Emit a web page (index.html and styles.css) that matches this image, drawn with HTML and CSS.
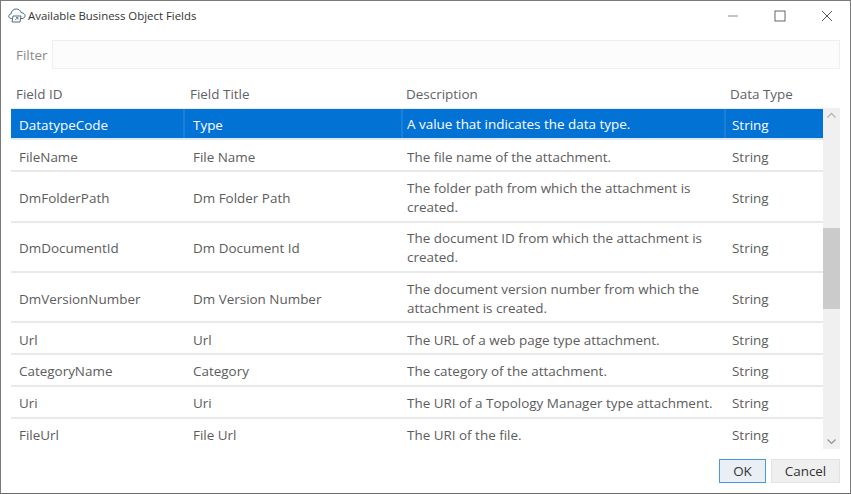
FILE: index.html
```html
<!DOCTYPE html>
<html lang="en">
<head>
<meta charset="utf-8">
<title>Available Business Object Fields</title>
<link rel="stylesheet" href="styles.css">
</head>
<body>
<div class="dialog">
  <header class="titlebar">
    <svg class="app-icon" width="18" height="15" viewBox="0 0 18 15" fill="none" stroke="#2f6f9f" stroke-width="1">
      <path d="M4 10.5H3.2C1.8 10.5 .8 9.5 .8 8.2 .8 7 1.7 6 3 5.9 3.3 3 5.5 1 8.2 1c2.4 0 4.4 1.5 5 3.7 2.2 0 3.9 1.4 3.9 3.1 0 1.5-1.2 2.7-3 2.7H13"/>
      <path d="M5 8h8l-1 6H4z" stroke="#5a6b78"/>
      <path d="M7 12l3-2.5M8 9.5h2v2" stroke="#5a6b78" stroke-width=".8"/>
    </svg>
    <span class="title">Available Business Object Fields</span>
    <div class="win-controls">
      <svg width="12" height="12" viewBox="0 0 12 12"><path d="M1 6h10" stroke="#8a8a8a" stroke-width="1"/></svg>
      <svg width="12" height="12" viewBox="0 0 12 12" fill="none"><rect x="1" y="1" width="10" height="10" stroke="#666"/></svg>
      <svg width="12" height="12" viewBox="0 0 12 12" fill="none"><path d="M1 1l10 10M11 1L1 11" stroke="#555"/></svg>
    </div>
  </header>
  <div class="filter">
    <label class="filter-label" for="filter">Filter</label>
    <input id="filter" class="filter-input" type="text">
  </div>
  <div class="heads">
    <span class="c1">Field ID</span>
    <span class="c2">Field Title</span>
    <span class="c3">Description</span>
    <span class="c4">Data Type</span>
  </div>
  <div class="grid-wrap">
    <div class="rows">
      <div class="row selected h31"><span class="c1">DatatypeCode</span><span class="c2">Type</span><span class="c3">A value that indicates the data type.</span><span class="c4">String</span></div>
      <div class="row h32 low"><span class="c1">FileName</span><span class="c2">File Name</span><span class="c3">The file name of the attachment.</span><span class="c4">String</span></div>
      <div class="row h51"><span class="c1">DmFolderPath</span><span class="c2">Dm Folder Path</span><span class="c3">The folder path from which the attachment is created.</span><span class="c4">String</span></div>
      <div class="row h50"><span class="c1">DmDocumentId</span><span class="c2">Dm Document Id</span><span class="c3">The document ID from which the attachment is created.</span><span class="c4">String</span></div>
      <div class="row h50 low"><span class="c1">DmVersionNumber</span><span class="c2">Dm Version Number</span><span class="c3">The document version number from which the attachment is created.</span><span class="c4">String</span></div>
      <div class="row h32 low"><span class="c1">Url</span><span class="c2">Url</span><span class="c3">The URL of a web page type attachment.</span><span class="c4">String</span></div>
      <div class="row h32"><span class="c1">CategoryName</span><span class="c2">Category</span><span class="c3">The category of the attachment.</span><span class="c4">String</span></div>
      <div class="row h32"><span class="c1">Uri</span><span class="c2">Uri</span><span class="c3">The URI of a Topology Manager type attachment.</span><span class="c4">String</span></div>
      <div class="row last"><span class="c1">FileUrl</span><span class="c2">File Url</span><span class="c3">The URI of the file.</span><span class="c4">String</span></div>
    </div>
    <div class="scrollbar">
      <svg class="arrow" width="17" height="16" viewBox="0 0 17 16" fill="none"><path d="M4.5 9.5l4-4 4 4" stroke="#b5b5b5" stroke-width="1.3"/></svg>
      <div class="track"><div class="thumb"></div></div>
      <svg class="arrow" width="17" height="16" viewBox="0 0 17 16" fill="none"><path d="M4.5 6.5l4 4 4-4" stroke="#8f8f8f" stroke-width="1.1"/></svg>
    </div>
  </div>
  <footer class="actions">
    <button class="btn primary" type="button">OK</button>
    <button class="btn" type="button">Cancel</button>
  </footer>
</div>
</body>
</html>
```
FILE: styles.css
```css
* { box-sizing: border-box; }
html, body { margin: 0; height: 100%; background: #fff; }
body { font-family: "Open Sans", "Noto Sans", sans-serif; font-size: 13.45px; color: #5c5c5c; }
.dialog { width: 851px; height: 494px; border: 1px solid #7a7a7a; border-bottom-color: #6a6a6a; display: flex; flex-direction: column; background: #fff; }
.titlebar { height: 29px; flex: none; display: flex; align-items: center; padding-left: 7px; }
.app-icon { flex: none; margin-right: 2px; }
.title { font-size: 11.4px; color: #333; }
.win-controls { margin-left: auto; display: flex; gap: 35px; padding-right: 17px; }
.filter { display: flex; flex: none; align-items: center; height: 29px; margin-top: 10px; padding: 0 10px 0 15px; }
.filter-label { width: 36px; color: #8a8a8a; }
.filter-input { flex: 1; height: 29px; border: 1px solid #efefef; background: #fcfcfc; outline: none; }
.heads { display: flex; flex: none; height: 39px; align-items: center; padding: 11px 0 0 15px; color: #5f6266; }
.heads .c1 { width: 174px; }
.heads .c2 { width: 216px; }
.heads .c3 { width: 324px; }
.heads .c4 { width: 80px; }
.grid-wrap { display: flex; flex: none; margin: 0 10px; height: 341px; }
.rows { width: 812px; flex: none; border-top: 1px solid #e8eef4; }
.row { display: flex; align-items: center; padding-top: 2px; border-bottom: 2px solid #e9e9e9; }
.row.low { padding-top: 4px; }
.row .c1 { width: 174px; padding-left: 8px; flex: none; }
.row .c2 { width: 218px; padding-left: 8px; flex: none; }
.row .c3 { width: 323px; padding-left: 4px; padding-right: 8px; flex: none; line-height: 19px; }
.row .c4 { width: 97px; padding-left: 6px; flex: none; }
.h31 { height: 31px; }
.h32 { height: 32px; }
.h51 { height: 51px; }
.h50 { height: 50px; }
.row.last { border-bottom: 0; height: 32px; padding-top: 0; }
.row.selected { background: #0272d4; color: #fff; border-bottom-color: #e0e8f0; padding-top: 0; }
.selected span { align-self: stretch; display: flex; align-items: center; padding-top: 2px; border-right: 2px solid #1a80da; }
.row.selected .c4 { border-right: 0; }
.scrollbar { width: 17px; flex: none; display: flex; flex-direction: column; background: #f0f0f0; }
.arrow { flex: none; display: block; }
.track { flex: 1; padding-top: 104px; }
.thumb { height: 81px; background: #cbcbcb; }
.actions { display: flex; justify-content: flex-end; gap: 5px; padding: 10px 10px 0 0; }
.btn { width: 47px; height: 24px; font: inherit; font-size: 13.45px; color: #333; background: #efefef; border: 1px solid #e2e2e2; padding: 0; }
.btn + .btn { width: 69px; }
.primary { border: 1px solid #4a98d8; background: #e9eff5; }
```
